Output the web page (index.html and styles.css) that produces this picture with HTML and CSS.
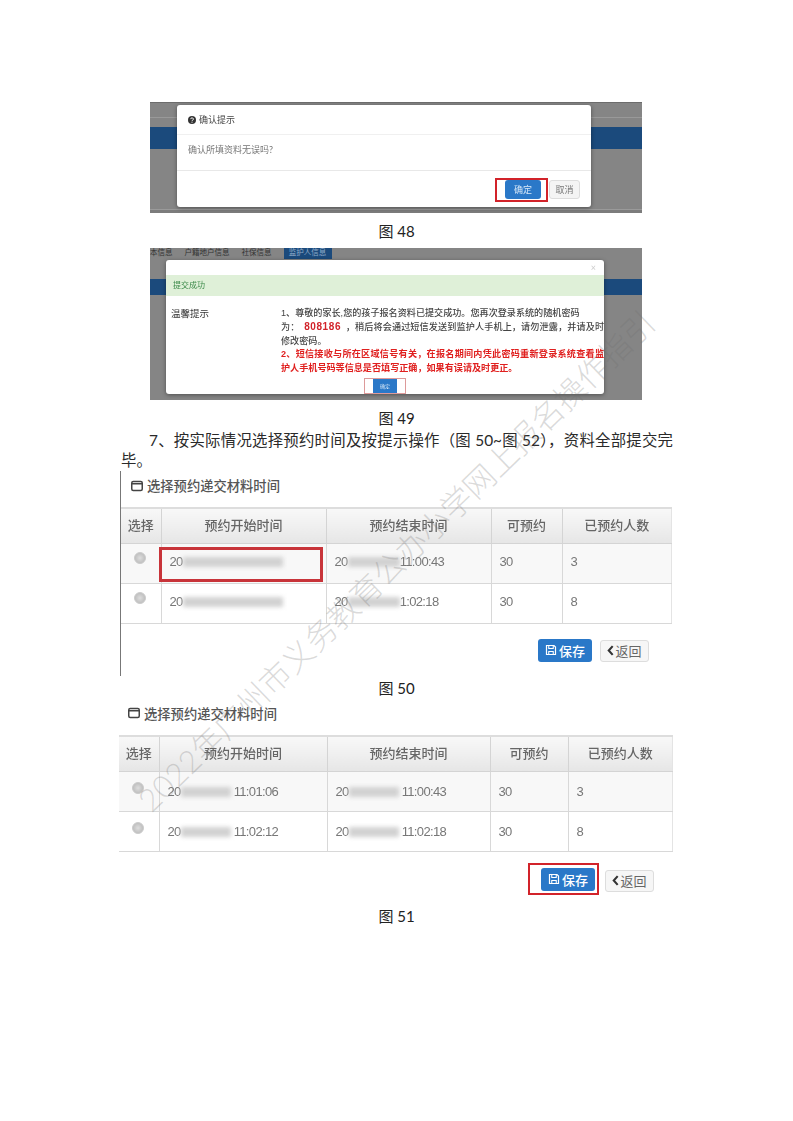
FILE: index.html
```html
<!DOCTYPE html>
<html lang="zh-CN">
<head>
<meta charset="utf-8">
<title>报名操作指引</title>
<link rel="stylesheet" href="styles.css">
</head>
<body>
<main class="page">
  <div class="shot shot-48">
    <div class="rule rule-48"></div>
    <div class="band band-48"></div>
    <div class="stub stub-48"></div>
    <div class="modal modal-48">
      <div class="m48-head">
        <svg class="qicon" viewBox="0 0 16 16"><circle cx="8" cy="8" r="8" fill="#333"/><path d="M5.4 6.2a2.7 2.4 0 1 1 3.9 2.1c-.9.5-1.3.9-1.3 1.8" fill="none" stroke="#fff" stroke-width="2"/><rect x="7" y="11.4" width="2" height="2" fill="#fff"/></svg>
        <span>确认提示</span>
      </div>
      <div class="m48-body">确认所填资料无误吗?</div>
      <div class="m48-foot">
        <span class="btn-primary-sm mark-48">确定</span>
        <span class="btn-cancel">取消</span>
      </div>
    </div>
  </div>
  <p class="caption cap-48">图 48</p>

  <div class="shot shot-49">
    <div class="tabs"><span>本信息</span><span>户籍地户信息</span><span>社保信息</span><span class="tab-on">监护人信息</span></div>
    <div class="band band-49"></div>
    <div class="modal modal-49">
      <div class="close">×</div>
      <div class="success">提交成功</div>
      <div class="m49-body">
        <div class="m49-label">温馨提示</div>
        <div class="m49-text">
          <p>1、尊敬的家长,您的孩子报名资料已提交成功。您再次登录系统的随机密码<br><span class="just">为： <b class="pwd">808186</b> ，稍后将会通过短信发送到监护人手机上，请勿泄露，并请及时</span><br>修改密码。</p>
          <p class="warn"><span class="just">2、短信接收与所在区域信号有关，在报名期间内凭此密码重新登录系统查看监</span><br>护人手机号码等信息是否填写正确，如果有误请及时更正。</p>
        </div>
      </div>
      <div class="m49-foot"><span class="mark-49"><span class="btn-tiny">确定</span></span></div>
    </div>
  </div>
  <p class="caption cap-49">图 49</p>

  <p class="para">7、按实际情况选择预约时间及按提示操作（图 50~图 52），资料全部提交完毕。</p>

  <section class="panel panel-50">
    <h2 class="panel-title">
      <svg class="wicon" viewBox="0 0 16 16"><rect x="1" y="2" width="14" height="12" rx="2" fill="none" stroke="#444" stroke-width="2"/><path d="M1 5h14" stroke="#444" stroke-width="2"/></svg>
      选择预约递交材料时间
    </h2>
    <table class="slots t50">
      <thead><tr><th class="c1">选择</th><th class="c2">预约开始时间</th><th class="c3">预约结束时间</th><th class="c4">可预约</th><th class="c5">已预约人数</th></tr></thead>
      <tbody>
        <tr><td><span class="radio"></span></td><td class="mark-cell"><span class="mark-50"></span>20<span class="smear w-a"></span></td><td>20<span class="smear w-b"></span>11:00:43</td><td>30</td><td>3</td></tr>
        <tr><td><span class="radio"></span></td><td>20<span class="smear w-a"></span></td><td>20<span class="smear w-b"></span>1:02:18</td><td>30</td><td>8</td></tr>
      </tbody>
    </table>
    <div class="actions actions-50">
      <span class="btn-save"><svg class="sicon" viewBox="0 0 16 16"><path d="M2 2h10l2 2v10H2z" fill="none" stroke="#fff" stroke-width="1.6"/><path d="M5 2v4h6V2M5 14v-4h6v4" fill="none" stroke="#fff" stroke-width="1.4"/></svg>保存</span>
      <span class="btn-back"><svg class="chev" viewBox="0 0 8 12"><path d="M6.5 1L2 6l4.500 5" fill="none" stroke="#333" stroke-width="2.4"/></svg>返回</span>
    </div>
  </section>
  <p class="caption cap-50">图 50</p>

  <section class="panel-51">
    <h2 class="panel-title">
      <svg class="wicon" viewBox="0 0 16 16"><rect x="1" y="2" width="14" height="12" rx="2" fill="none" stroke="#444" stroke-width="2"/><path d="M1 5h14" stroke="#444" stroke-width="2"/></svg>
      选择预约递交材料时间
    </h2>
    <table class="slots t51">
      <thead><tr><th class="c1">选择</th><th class="c2">预约开始时间</th><th class="c3">预约结束时间</th><th class="c4">可预约</th><th class="c5">已预约人数</th></tr></thead>
      <tbody>
        <tr><td><span class="radio"></span></td><td>20<span class="smear w-c"></span>11:01:06</td><td>20<span class="smear w-c"></span>11:00:43</td><td>30</td><td>3</td></tr>
        <tr><td><span class="radio"></span></td><td>20<span class="smear w-c"></span>11:02:12</td><td>20<span class="smear w-c"></span>11:02:18</td><td>30</td><td>8</td></tr>
      </tbody>
    </table>
    <div class="actions actions-51">
      <span class="mark-51"><span class="btn-save"><svg class="sicon" viewBox="0 0 16 16"><path d="M2 2h10l2 2v10H2z" fill="none" stroke="#fff" stroke-width="1.6"/><path d="M5 2v4h6V2M5 14v-4h6v4" fill="none" stroke="#fff" stroke-width="1.4"/></svg>保存</span></span>
      <span class="btn-back"><svg class="chev" viewBox="0 0 8 12"><path d="M6.5 1L2 6l4.500 5" fill="none" stroke="#333" stroke-width="2.4"/></svg>返回</span>
    </div>
  </section>
  <p class="caption cap-51">图 51</p>

  <div class="watermark">2022年广州市义务教育公办小学网上报名操作指引</div>
</main>
</body>
</html>
```

FILE: styles.css
```css
* { box-sizing: border-box; }
html, body { margin: 0; padding: 0; background: #fff; }
body { font-family: "Lato", "Noto Sans CJK SC", sans-serif; color: #333; }
.page { position: relative; width: 793px; height: 1121px; padding-top: 102px; overflow: hidden; }
p { margin: 0; }

.shot { position: relative; width: 492px; margin-left: 150px; background: #858585; overflow: hidden; }
.shot-48 { height: 111px; border-top: 1px solid #6c6c6c; }
.shot-49 { height: 152px; }
.band { position: absolute; left: 0; right: 0; background: #1b4a7c; }
.band-48 { top: 24px; height: 22px; }
.band-49 { top: 31px; height: 16px; }
.rule { position: absolute; left: 0; right: 0; height: 1px; background: #999; }
.rule-48 { top: 14px; }
.stub { position: absolute; }
.stub-48 { left: 0; right: 0; bottom: 0; height: 4px; background: #7c7c7c; border-top: 1px solid #9a9a9a; }
.modal { position: absolute; background: #fff; border-radius: 3px; box-shadow: 0 1px 4px rgba(0,0,0,.4); filter: blur(.3px); }
.modal-48 { left: 27px; top: 2px; width: 414px; height: 102px; display: flex; flex-direction: column; font-size: 9px; color: #777; }
.m48-head { height: 30px; padding: 0 11px; display: flex; align-items: center; gap: 3px; border-bottom: 1px solid #f0f0f0; color: #444; }
.qicon { width: 8px; height: 8px; }
.m48-body { height: 35px; padding: 8px 11px; }
.m48-foot { flex: 1; border-top: 1px solid #e8e8e8; display: flex; justify-content: flex-end; align-items: center; padding-right: 11px; gap: 8px; }
.btn-primary-sm { position: relative; width: 36px; height: 19px; background: #2a78c8; color: #d8e8f8; border-radius: 3px; display: flex; align-items: center; justify-content: center; }
.mark-48::after { content: ""; position: absolute; left: -10px; right: -7px; top: -2px; bottom: -3px; border: 2px solid #d2232a; }
.btn-cancel { width: 31px; height: 19px; background: #f4f4f4; border: 1px solid #ddd; border-radius: 3px; display: flex; align-items: center; justify-content: center; }

.tabs { display: flex; gap: 12px; height: 11px; font-size: 7.5px; line-height: 9px; color: #333; }
.tab-on { width: 48px; background: #1b4a7c; color: #8fabc8; text-align: center; margin-left: 0; }
.modal-49 { left: 16px; top: 12px; width: 438px; height: 134px; display: flex; flex-direction: column; }
.close { height: 15px; padding-right: 8px; text-align: right; font-size: 9px; line-height: 15px; color: #ccc; }
.success { height: 21px; background: #dff0d8; color: #3c8a4a; font-size: 8px; line-height: 21px; padding-left: 7px; }
.m49-body { display: flex; padding: 11px 0 0 5px; height: 83px; }
.m49-label { width: 111px; font-size: 9.5px; line-height: 13px; color: #333; }
.m49-text { width: 323px; font-size: 9.1px; line-height: 13.4px; font-family: "Liberation Sans", "Noto Sans CJK SC", sans-serif; color: #444; font-weight: 500; }
.just { display: inline-block; width: 323px; text-align: justify; text-align-last: justify; }
.pwd { color: #d2232a; font-size: 10px; letter-spacing: .6px; margin: 0 2px; }
.warn { color: #e0201f; font-weight: 700; }
.m49-foot { display: flex; justify-content: center; }
.mark-49 { display: flex; justify-content: center; width: 42px; height: 16px; border: 1px solid #dd9a9a; margin-top: -1px; }
.btn-tiny { width: 24px; height: 14px; background: #2a78c8; color: #cfe2f5; font-size: 5px; line-height: 14px; text-align: center; }

.caption { text-align: center; font-size: 15px; line-height: 20px; color: #222; }
.cap-48 { padding-top: 8px; height: 35px; }
.cap-49 { padding-top: 8px; height: 29px; }
.cap-50 { margin-top: 2px; }
.cap-51 { margin-top: 11px; }

.para { width: 552px; margin: 0 0 0 121px; padding-top: 1px; height: 41px; font-size: 15.4px; line-height: 20px; text-indent: 28px; text-align: justify; color: #2a2a2a; }

.panel { margin: 1px 0 0 120px; width: 552px; height: 205px; border-left: 1px solid #777; padding-top: 6px; }
.panel-51 { margin: 6px 0 0 119px; width: 554px; }
.panel-title { display: flex; align-items: center; gap: 4px; margin: 0 0 13px 10px; height: 17px; font-size: 13.3px; font-weight: 500; color: #555; }
.panel-51 .panel-title { margin: 0 0 13px 9px; height: 18px; }
.wicon { width: 12px; height: 12px; }

.slots { border-collapse: collapse; table-layout: fixed; width: 100%; font-family: "Liberation Sans", "Noto Sans CJK SC", sans-serif; filter: blur(.3px); }
.slots th { height: 35px; padding: 0 0 3px; font-size: 13px; font-weight: 500; color: #666; background: linear-gradient(#f8f8f8, #e6e6e6); border: 1px solid #d4d4d4; border-top: 2px solid #ddd; border-left-color: #ccc; }
.slots td { height: 40px; padding: 0 0 0 8px; font-size: 13px; letter-spacing: -.65px; color: #777; border: 1px solid #d8d8d8; border-left-color: #c4c4c4; vertical-align: middle; }
.t50 td { padding-bottom: 3px; }
.slots th:first-child, .slots td:first-child { border-left: 0; }
.slots th:last-child, .slots td:last-child { border-right-color: #e4e4e4; }
.slots tbody tr:first-child { background: #f8f8f8; }
.t50 .c1 { width: 40px; } .t50 .c2 { width: 165px; } .t50 .c3 { width: 165px; } .t50 .c4 { width: 71px; }
.t51 .c1 { width: 40px; } .t51 .c2 { width: 168px; } .t51 .c3 { width: 163px; } .t51 .c4 { width: 78px; }
.radio { display: block; width: 12px; height: 12px; margin: -7px 0 0 5px; border-radius: 50%; background: radial-gradient(#ddd, #b4b4b4); border: 1px solid #ccc; }
.mark-cell { position: relative; }
.mark-50 { position: absolute; left: -3px; top: 3px; width: 164px; height: 35px; border: 3px solid #c8343a; }
.smear { display: inline-block; height: 10px; background: #d2d2d2; filter: blur(2px); vertical-align: -1px; }
.w-a { width: 100px; }
.w-b { width: 52px; }
.w-c { width: 50px; margin-right: 3px; }

.actions { display: flex; align-items: flex-start; font-size: 13px; }
.actions-50 { margin: 15px 0 0 417px; gap: 8px; }
.actions-51 { margin: 11px 0 0 409px; gap: 6px; }
.btn-save { display: inline-flex; align-items: center; justify-content: center; gap: 2px; width: 54px; height: 23px; background: #2a78c8; color: #fff; border-radius: 3px; font-weight: 500; }
.sicon { width: 12px; height: 12px; }
.btn-back { display: inline-flex; align-items: center; justify-content: center; gap: 1px; width: 49px; height: 22px; margin-top: 1px; background: #f6f6f6; border: 1px solid #ddd; border-radius: 3px; color: #666; }
.chev { width: 7px; height: 11px; }
.mark-51 { display: flex; justify-content: flex-end; align-items: flex-end; width: 71px; height: 32px; padding: 0 2px 2px 0; border: 2px solid #d2232a; }
.actions-51 .btn-back { margin-top: 7px; }

.watermark { position: absolute; left: 45px; top: 544px; width: 700px; text-align: center; font-size: 31.5px; line-height: 36px; font-weight: 300; color: rgba(110,110,110,.25); white-space: nowrap; transform: rotate(-44deg); pointer-events: none; }
```
